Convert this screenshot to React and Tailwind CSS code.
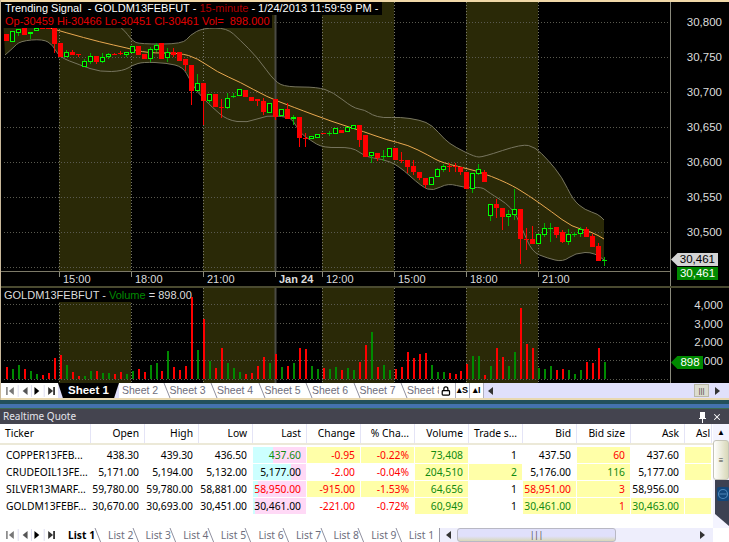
import { Lock, X } from "lucide-react";

// [color, bodyTop, bodyBottom, wickTop, wickBottom] in page pixels, one per 15 minute bar
const CANDLES = [
  ["r",34,41],["g",31,42],["g",29,33,29,36],["r",28,35],["g",32,34,32,39],["g",28,31],["r",28,29],["r",28,29],
  ["r",28,44,28,53],["r",43,57],["g",52,57,50,57],["r",52,55,50,55],["r",54,54,54,57],["g",61,67,59,67],["g",56,62,53,64],
  ["r",56,62,56,64],["g",57,62,53,63],["g",54,57,53,59],["r",54,54,53,55],["r",53,54,51,55],["g",52,55,52,57],["g",46,53],
  ["r",46,55],["r",54,59],["g",49,59,47,62],["g",45,50,43,52],["r",43,59],["g",52,58,48,62],["r",52,55,48,57],["r",52,61],
  ["r",59,65,59,71],["r",65,91,65,105],["g",83,91,74,91],["r",83,101,83,125],["g",94,101,94,103],["r",94,107],["r",107,107,99,118],
  ["g",98,108,93,109],["g",96,96,93,98],["g",89,96],["r",90,97],["r",97,101],["r",99,101,99,106],["r",101,112,98,115],["g",103,113],
  ["r",99,117,99,120],["g",109,116],["r",109,119,103,119],["g",117,119,115,125],["r",117,138,117,147],["r",138,138,133,147],
  ["g",136,139],["g",134,138],["r",133,134],["g",133,133,131,136],["g",128,134],["r",130,133],["g",127,132],["g",125,129],
  ["r",125,140,125,147],["r",135,157],["g",152,156,152,163],["r",153,158,153,161],["g",156,156,150,161],["g",148,157],["r",148,160],
  ["r",160,160,152,163],["r",160,167,160,173],["r",166,172,160,175],["r",172,178,172,180],["r",178,185,178,188],["g",177,185],
  ["g",169,177,168,177],["g",166,170,164,172],["r",166,166,163,172],["r",166,166,163,172],["r",167,172,167,175],["r",172,189],
  ["g",173,189,173,193],["g",169,174,164,175],["r",172,182,170,182],["g",204,216,204,221],["r",204,208,199,218],["r",208,217,208,230],
  ["g",214,217,210,226],["g",209,215,189,220],["r",209,239,209,264],["r",239,239,228,250],["r",239,244,226,244],["g",234,244],
  ["g",228,235,223,237],["g",228,228,223,242],["r",227,235,227,238],["r",232,242,230,243],["g",234,242,229,245],["g",234,234,232,237],
  ["g",229,234,227,237],["r",229,237,227,237],["r",236,247,234,247],["r",246,261,243,261],["g",260,260,257,266],
];

const VOLUME = ("r367 g369 g365 r369 g371 g374 r375 r373 r358 r355 g365 r372 r376 g376 g371 r371 g373 g373 r374 r372 " +
  "g374 g371 r369 r372 g365 g363 r371 g351 r367 r370 r366 r297 g350 r319 g361 r368 r348 g363 g368 g372 " +
  "r374 r373 r366 r357 g363 r354 g367 r366 g363 r348 r349 g366 g369 r368 g369 g367 r370 g368 g370 r362 " +
  "r345 g332 r367 g365 g370 r369 r367 r352 r358 r354 r353 g365 g372 g372 r373 r374 r371 r364 g356 g356 " +
  "r375 g366 r348 r357 g366 g352 r308 r344 r348 g368 g369 g366 r370 r369 g370 g374 g370 r362 r363 r348 g362").split(" ");

const UPPER = "3,15 60,12 100,15 123,28 132,41 140,44 183,44 190,35 203,28 227,28 240,40 257,57 275,82 287,87 317,87 333,92 353,108 365,110 372,115 383,118 400,117 420,120 432,125 445,140 455,147 475,157 483,157 522,144 535,147 548,160 562,177 573,200 585,210 598,214 604,220";
const LOWER = "604,260 595,252 575,253 563,262 547,258 532,252 522,228 512,207 488,192 482,187 465,188 448,183 433,191 422,187 398,165 382,159 365,157 353,147 323,148 310,140 300,133 293,120 287,117 267,115 247,123 227,120 213,108 197,92 190,80 183,67 167,63 143,62 133,65 123,71 100,72 80,65 59,57 53,45 43,39 20,41 13,48 5,55";
const AVERAGE = "50,28 67,33 100,42 127,48 147,53 180,53 197,58 217,72 240,82 267,97 293,107 333,122 365,132 387,140 408,145 428,155 442,163 475,170 508,183 528,195 552,212 572,227 592,232 604,239";

// rounds the corners of a point list through the segment midpoints
function smooth(points) {
  const pts = points.split(" ").map((p) => p.split(",").map(Number));
  let d = `M${pts[0][0]} ${pts[0][1]}`;
  for (let i = 1; i < pts.length - 1; i++) {
    const mx = (pts[i][0] + pts[i + 1][0]) / 2;
    const my = (pts[i][1] + pts[i + 1][1]) / 2;
    d += `Q${pts[i][0]} ${pts[i][1]} ${mx} ${my}`;
  }
  const last = pts[pts.length - 1];
  return `${d}L${last[0]} ${last[1]}`;
}

const BANDS = [59, 203, 322, 466];
const V_LINES = [59, 131, 203, 322, 394, 466, 538];
const barX = (i) => 6 + i * 5.98;

function Backdrop({ top, height, gridLines }) {
  return (
    <>
      {BANDS.map((x) => (
        <rect key={x} x={x} y={top} width="72" height={height} fill="#2a2907" />
      ))}
      {gridLines.map((y) => (
        <line key={y} x1="4" x2="670" y1={y + 0.5} y2={y + 0.5} stroke="#5a5a50" strokeDasharray="1 2" />
      ))}
      {V_LINES.map((x) => (
        <line key={x} x1={x + 0.5} x2={x + 0.5} y1={top} y2={top + height} stroke="#77776a" strokeDasharray="1 2" />
      ))}
      <line x1="275.5" x2="275.5" y1={top} y2={top + height} stroke="#4a4a44" strokeWidth="2" />
    </>
  );
}

function Candle({ bar, i }) {
  const [c, top, bottom, wickTop = top, wickBottom = bottom] = bar;
  const x = Math.round(barX(i));
  const color = c === "r" ? "#ff0000" : "#00e000";
  return (
    <g>
      <line x1={x + 0.5} x2={x + 0.5} y1={wickTop} y2={wickBottom} stroke={c === "r" ? "#ff0000" : "#00b000"} />
      {top === bottom ? (
        <line x1={x - 2} x2={x + 3} y1={top + 0.5} y2={top + 0.5} stroke={color} />
      ) : c === "r" ? (
        <rect x={x - 2} y={top} width="5" height={bottom - top} fill="#ff0000" />
      ) : (
        <rect x={x - 1.5} y={top + 0.5} width="4" height={bottom - top - 1} fill="#161604" stroke="#00ff00" />
      )}
    </g>
  );
}

function PricePlot() {
  return (
    <svg viewBox="0 2 670 269" className="block h-[269px] w-[670px]">
      <path d={`${smooth(UPPER)}${smooth(LOWER).replace("M", "L")}Z`} fill="#2a2907" />
      <Backdrop top={2} height={269} gridLines={[22, 57, 92, 127, 162, 197, 232, 267]} />
      <path d={smooth(UPPER)} fill="none" stroke="#77755f" />
      <path d={smooth(LOWER)} fill="none" stroke="#77755f" />
      <path d={smooth(AVERAGE)} fill="none" stroke="#e8a850" />
      {CANDLES.map((bar, i) => (
        <Candle key={i} bar={bar} i={i} />
      ))}
    </svg>
  );
}

function VolumePlot() {
  return (
    <svg viewBox="0 288 670 95" className="block h-[95px] w-[670px]">
      <Backdrop top={288} height={95} gridLines={[304, 323, 342, 360, 379]} />
      {VOLUME.map((v, i) => {
        const y = Number(v.slice(1));
        return (
          <rect key={i} x={Math.round(barX(i))} y={y} width="2" height={379 - y} fill={v[0] === "r" ? "#ff0000" : "#008a00"} />
        );
      })}
    </svg>
  );
}

const TIME_CELLS = [
  ["", 59], ["15:00", 72], ["18:00", 72], ["21:00", 72], ["Jan 24", 47], ["12:00", 72], ["15:00", 72], ["18:00", 72], ["21:00", 132],
];

function TimeAxis() {
  return (
    <div className="flex h-[15px] w-[670px] border-t border-[#7d7a68] text-[11px] leading-[15px] text-[#dcdcdc]">
      {TIME_CELLS.map(([label, w], i) => (
        <div key={i} style={{ width: w }} className={`relative shrink-0 pl-[4px] ${label === "Jan 24" ? "font-bold pl-[2px]" : ""}`}>
          {i > 0 && <span className="absolute left-0 top-0 h-[5px] w-[1px] bg-[#8a8a7c]" />}
          {label}
        </div>
      ))}
    </div>
  );
}

function NavButtons() {
  return (
    <div className="flex w-[58px] shrink-0 items-center gap-[1px] bg-white pl-[2px] pr-[1px]">
      <svg width="56" height="14" viewBox="0 0 56 14">
        <path d="M5 3v8" stroke="#777" strokeWidth="1.5" />
        <path d="M12 3v8L7 7z" fill="#777" />
        <path d="M26 3v8l-5-4z" fill="#555" />
        <path d="M33 3v8l5-4z" fill="#000" />
        <path d="M47 3v8l5-4z" fill="#333" />
        <path d="M53 3v8" stroke="#000" strokeWidth="1.5" />
        <path d="M16.5 1v12M30 1v12M43 1v12" stroke="#dcdcf0" />
      </svg>
    </div>
  );
}

function TabEdge() {
  return (
    <svg width="8" height="16" viewBox="0 0 8 16" className="absolute -right-[4px] top-0">
      <path d="M1 0l6 15" stroke="#8f8f9f" fill="none" />
    </svg>
  );
}

function SheetTabs() {
  return (
    <div className="flex h-[15px] shrink-0 bg-[#e0e0fb] text-[10.5px] leading-[15px]">
      <NavButtons />
      <div className="w-[61px] shrink-0 bg-black text-center text-[11.5px] font-bold text-white [clip-path:polygon(0_0,100%_0,92%_100%,8%_100%)]">
        Sheet 1
      </div>
      <div className="flex w-[320px] shrink-0 overflow-hidden bg-white text-[#6e6e7c]">
        {[2, 3, 4, 5, 6, 7, 8].map((n) => (
          <div key={n} className={`relative shrink-0 whitespace-nowrap pl-[3px] ${n === 8 ? "w-[35px]" : "w-[47.5px]"}`}>
            Sheet {n}
            {n < 8 && <TabEdge />}
          </div>
        ))}
      </div>
      <div className="flex w-[45px] shrink-0 items-center bg-white text-[9px] font-bold text-black">
        <Lock size={10} strokeWidth={3} className="ml-[2px] mr-[4px]" />
        <span className="w-[15px] border-l border-[#b0b0c0] text-center">▴S</span>
        <span className="w-[15px] border-x border-[#b0b0c0] text-center">▴I</span>
      </div>
      <div className="flex grow items-center pl-[4px]">
        <svg width="6" height="8" viewBox="0 0 6 8"><path d="M5 0v8L0 4z" fill="#333" /></svg>
        <div className="ml-auto mr-[6px] flex h-[13px] w-[15px] items-center justify-center border border-[#b8b8a8] bg-[#dcdcd0] text-[8px] text-[#444]">|||</div>
        <svg width="6" height="8" viewBox="0 0 6 8" className="mr-[8px]"><path d="M0 0v8l5-4z" fill="#333" /></svg>
      </div>
    </div>
  );
}

const Y = "bg-[#ffffa8]";
const RED = "text-[#ff0000]";
const GRN = "text-[#118a11]";

const ROWS = [
  {
    ticker: "COPPER13FEB...", last: "437.60", lastColor: GRN, bar: 20,
    cells: ["438.30", "439.30", "436.50"],
    rest: [["-0.95", Y, RED], ["-0.22%", Y, RED], ["73,408", Y, GRN], ["1"], ["437.50"], ["60", Y, RED], ["437.60"], ["", Y]],
  },
  {
    ticker: "CRUDEOIL13FE...", last: "5,177.00", lastColor: "text-black", bar: 38,
    cells: ["5,171.00", "5,194.00", "5,132.00"],
    rest: [["-2.00", "", RED], ["-0.04%", "", RED], ["204,510", Y, GRN], ["2", Y, GRN], ["5,176.00"], ["116", Y, GRN], ["5,177.00"], ["", Y]],
  },
  {
    ticker: "SILVER13MARF...", last: "58,950.00", lastColor: RED, bar: 5,
    cells: ["59,780.00", "59,780.00", "58,881.00"],
    rest: [["-915.00", Y, RED], ["-1.53%", Y, RED], ["64,656", Y, GRN], ["1"], ["58,951.00", Y, RED], ["3", Y, RED], ["58,956.00"], [""]],
  },
  {
    ticker: "GOLDM13FEBF...", last: "30,461.00", lastColor: "text-black", bar: 2,
    cells: ["30,670.00", "30,693.00", "30,451.00"],
    rest: [["-221.00", "", RED], ["-0.72%", "", RED], ["60,949", Y, GRN], ["1"], ["30,461.00", Y, GRN], ["1", Y, RED], ["30,463.00", Y, GRN], ["", Y]],
  },
];

const HEADERS = ["Ticker", "Open", "High", "Low", "Last", "Change", "% Cha...", "Volume", "Trade s...", "Bid", "Bid size", "Ask", "Asl"];
const COLS = "grid grid-cols-[91px_repeat(11,54px)_27px]";

function Cell({ text, bg = "", color = "text-black" }) {
  return (
    <div className={`mb-[1px] mr-[1px] h-[16px] overflow-hidden pr-[5px] text-right leading-[16px] ${bg} ${color}`}>{text}</div>
  );
}

function QuoteTable() {
  return (
    <div className="w-[713px] shrink-0 overflow-hidden">
      <div className={`${COLS} h-[21px] border-b-2 border-[#ece9d8] leading-[19px] text-black`}>
        {HEADERS.map((h, i) => (
          <div key={h} className={`overflow-hidden whitespace-nowrap border-r border-[#e4e4f6] ${i === 0 ? "pl-[5px]" : "pr-[5px] text-right"} ${i === 12 ? "pl-[11px] pr-0 text-left" : ""}`}>
            {h}
          </div>
        ))}
      </div>
      <div className="h-[2px]" />
      {ROWS.map((r) => (
        <div key={r.ticker} className={COLS}>
          <div className="h-[17px] whitespace-nowrap pl-[6px] leading-[16px] text-black">{r.ticker}</div>
          {r.cells.map((t, i) => (
            <Cell key={i} text={t} />
          ))}
          <div className="relative mb-[1px] mr-[1px] h-[16px] bg-[#ffd9f6] pr-[5px] text-right leading-[16px]">
            <div style={{ width: r.bar }} className="absolute inset-y-0 left-0 bg-[#ccffff]" />
            <span className={`relative ${r.lastColor}`}>{r.last}</span>
          </div>
          {r.rest.map(([t, bg, color], i) => (
            <Cell key={i} text={t} bg={bg} color={color} />
          ))}
        </div>
      ))}
    </div>
  );
}

function ListTabs() {
  return (
    <div className="flex h-[14px] shrink-0 bg-white leading-[14px]">
      <NavButtons />
      <div className="relative w-[40px] shrink-0 pl-[10px] font-bold text-black">
        List 1
        <TabEdge />
      </div>
      <div className="flex w-[341px] shrink-0 overflow-hidden text-[#6e6e7c]">
        {[2, 3, 4, 5, 6, 7, 8, 9, 10].map((n) => (
          <div key={n} className={`relative shrink-0 whitespace-nowrap pl-[10px] ${n === 10 ? "w-[40px]" : "w-[37.6px]"}`}>
            {n === 10 ? "List 1" : `List ${n}`}
            {n < 10 && <TabEdge />}
          </div>
        ))}
      </div>
      <div className="flex w-[274px] items-center border-l border-[#9a9aa8] bg-[#eeeefc] pl-[6px]">
        <svg width="6" height="8" viewBox="0 0 6 8"><path d="M5 0v8L0 4z" fill="#333" /></svg>
        <div className="ml-[5px] flex h-[14px] w-[159px] items-center justify-center rounded-[3px] border border-[#b8b8c4] bg-[linear-gradient(#e0e0fb_60%,#d8d8b8)] text-[8px] text-[#444]">|||</div>
        <svg width="6" height="8" viewBox="0 0 6 8" className="ml-[84px]"><path d="M0 0v8l5-4z" fill="#333" /></svg>
      </div>
    </div>
  );
}

function TeamViewerTab() {
  return (
    <div className="absolute right-0 top-[480px] h-[46px] w-[17px]">
      <svg width="17" height="46" viewBox="0 0 17 46" className="block">
        <path d="M3 0h14v46L3 34z" fill="#3d4152" />
        <rect x="5" y="7" width="12" height="14" rx="2" fill="#12467a" />
        <circle cx="11" cy="14" r="4.5" fill="none" stroke="#4f86b8" strokeWidth="1.2" />
        <path d="M7.5 14h7" stroke="#4f86b8" />
      </svg>
    </div>
  );
}

export default function App() {
  return (
    <div className="relative flex h-[542px] w-[729px] flex-col overflow-hidden bg-black font-['Liberation_Sans',Arial,sans-serif]">
      <div className="h-[2px] shrink-0 bg-[#f0d8a8]" />

      {/* price pane */}
      <div className="relative flex h-[284px] shrink-0">
        <div>
          <PricePlot />
          <TimeAxis />
        </div>
        <div className="w-[59px] border-l border-[#8a8a7c] pr-[7px] pt-[3px] text-right text-[11.5px] text-[#dcdcdc]">
          {["30,800", "30,750", "30,700", "30,650", "30,600", "30,550", "30,500"].map((p) => (
            <div key={p} className="h-[35px] leading-[35px]">{p}</div>
          ))}
        </div>
        <div className="absolute left-0 top-0 text-[11px] leading-[13px]">
          <div className="w-max bg-black pl-[5px] pr-[4px] text-white">
            Trending Signal&nbsp; - GOLDM13FEBFUT - <span className="text-[#b00000]">15-minute</span> - 1/24/2013 11:59:59 PM -
          </div>
          <div className="w-[272px] whitespace-nowrap bg-black pl-[5px] text-[#e00000]">
            Op-30459 Hi-30466 Lo-30451 Cl-30461 Vol=&nbsp; 898.000
          </div>
        </div>
        <div className="absolute left-[671px] top-[251px] h-[13px] w-[47px] bg-[#d4d4d4] pr-[3px] text-right text-[11.5px] leading-[13px] text-black [clip-path:polygon(0_50%,14%_0,100%_0,100%_100%,14%_100%)]">30,461</div>
        <div className="absolute left-[677px] top-[265px] h-[13px] w-[41px] bg-[#008a00] text-center text-[11.5px] leading-[13px] text-white">30,461</div>
      </div>
      <div className="h-[2px] shrink-0 bg-[#4a4a30]" />

      {/* volume pane */}
      <div className="relative flex h-[95px] shrink-0">
        <VolumePlot />
        <div className="w-[59px] border-l border-[#8a8a7c] pr-[6px] pt-[8px] text-right text-[11.5px] text-[#dcdcdc]">
          {["4,000", "3,000", "2,000", "1,000"].map((p) => (
            <div key={p} className="h-[18.5px] leading-[18.5px]">{p}</div>
          ))}
        </div>
        <div className="absolute left-0 top-0 h-[14px] w-[190px] whitespace-nowrap bg-black pl-[4px] text-[11px] leading-[14px] text-[#dcdcdc]">
          GOLDM13FEBFUT - <span className="text-[#008a00]">Volume</span> = 898.00
        </div>
        <div className="absolute left-[671px] top-[68px] h-[13px] w-[32px] bg-[#008a00] pl-[6px] text-center text-[11.5px] leading-[13px] text-white [clip-path:polygon(0_50%,20%_0,100%_0,100%_100%,20%_100%)]">898</div>
      </div>

      <SheetTabs />
      <div className="h-[2px] shrink-0 bg-[#e8d8b0]" />

      {/* docked window title */}
      <div className="h-[4px] shrink-0 bg-[#22505a]" />
      <div className="h-[5px] shrink-0 border-b border-[#3a6a50] bg-[#4472ad]" />
      <div className="flex h-[15px] shrink-0 items-center bg-[#44444f] pl-[3px] font-['Noto_Sans',sans-serif] text-[10px] text-[#e4e4ec]">
        Realtime Quote
        <svg width="9" height="12" viewBox="0 0 9 12" className="ml-auto mr-[5px]">
          <path d="M2 1h5v6h1v1H1V7h1zM4 8h1v4H4z" fill="#fff" />
        </svg>
        <X size={10} strokeWidth={2.5} className="mr-[7px] text-white" />
      </div>

      {/* quote list */}
      <div className="flex min-h-0 grow flex-col bg-white font-['Noto_Sans',sans-serif] text-[10.3px]">
        <div className="flex grow">
          <QuoteTable />
          <div className="w-[16px] bg-[#f4f4ff]">
            <div className="flex h-[16px] items-center justify-center text-[8px] text-black">▲</div>
            <div className="flex h-[40px] items-center justify-center rounded-[3px] border border-[#c4c4b8] bg-[linear-gradient(90deg,#fff,#d8d8b8)] text-[8px] text-[#444]">≡</div>
          </div>
        </div>
        <ListTabs />
      </div>

      {/* window edge */}
      <div className="absolute left-0 top-0 h-[400px] w-[1px] bg-[#c8b89a]" />
      <TeamViewerTab />
    </div>
  );
}
